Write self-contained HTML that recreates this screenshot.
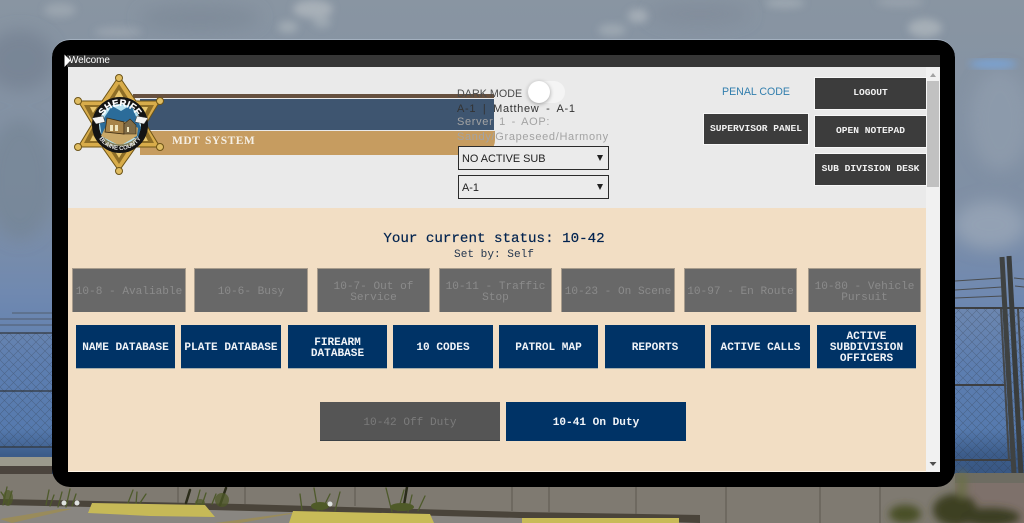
<!DOCTYPE html>
<html lang="en">
<head>
<meta charset="utf-8">
<title>MDT System</title>
<style>
html,body{margin:0;padding:0;width:1024px;height:523px;overflow:hidden;background:#7f8d9d}
*{box-sizing:border-box}
.a{position:absolute}
#bg{position:absolute;left:0;top:0}
.frame{left:52px;top:39px;width:903px;height:448px;background:#000;border-radius:18px;border-top:1px solid #a3b0bf}
.tbar{left:67px;top:55px;width:873px;height:12px;background:#363636}
.welcome{left:69px;top:54px;font:10px/13px "Liberation Sans Narrow","Liberation Sans",sans-serif;color:#fff;letter-spacing:-.1px}
.head{left:68px;top:67px;width:858px;height:141px;background:#eaeaea}
.beige{left:68px;top:208px;width:858px;height:264px;background:#f2dec4;border-bottom:1px solid #fff5e6}
.sb{left:926px;top:67px;width:14px;height:405px;background:#f1f1f1}
.thumb{left:927px;top:81px;width:12px;height:106px;background:#c1c1c1}
.btn{position:absolute;display:flex;align-items:center;justify-content:center;text-align:center;font-family:"Liberation Mono",monospace;font-size:11.1px;line-height:11px;padding-top:4px}
.dk{background:#3c3c3c;color:#f2f2f2;font-weight:bold;border:1px solid #f7f7f7;font-size:9.6px;padding:0 0 2px 0}
.st{background:#686868;color:#8b8b8b;top:268px;height:44px;border:1px solid #a89c8c;border-width:1px 1px 0 1px}
.nv{background:#003366;color:#f1f4f8;font-weight:bold;top:325px;height:44px;border-bottom:1px solid #a9b0ad}
.sel{left:458px;width:151px;height:24px;border:1px solid #2b2b2b;font:10.9px/24px "Liberation Sans",sans-serif;color:#222;padding-left:3px;background:#ebebeb}
.sel i{position:absolute;right:5px;top:8px;width:0;height:0;border-left:3px solid transparent;border-right:3px solid transparent;border-top:6px solid #222}
.lt{font-family:"Liberation Sans",sans-serif;font-size:11px;line-height:13px;white-space:nowrap;letter-spacing:.67px}
</style>
</head>
<body>
<svg id="bg" width="1024" height="523" viewBox="0 0 1024 523" xmlns="http://www.w3.org/2000/svg">
<defs>
<linearGradient id="sky" x1="0" y1="0" x2="0" y2="1">
<stop offset="0" stop-color="#8995a2"/><stop offset=".4" stop-color="#7f8fa5"/>
<stop offset=".56" stop-color="#7089b0"/><stop offset=".7" stop-color="#5d7eb0"/>
<stop offset=".82" stop-color="#567aae"/><stop offset=".87" stop-color="#3c5c8a"/><stop offset="1" stop-color="#2f4a72"/>
</linearGradient>
<filter id="b8"><feGaussianBlur stdDeviation="8"/></filter>
<filter id="b4"><feGaussianBlur stdDeviation="4"/></filter>
<pattern id="chain" width="9" height="9" patternUnits="userSpaceOnUse">
<path d="M0 0L9 9M9 0L0 9" stroke="#2c3238" stroke-width=".6" opacity=".32"/>
</pattern>
</defs>
<rect width="1024" height="523" fill="url(#sky)"/>
<g filter="url(#b8)">
<ellipse cx="20" cy="60" rx="34" ry="30" fill="#6f7d8d" opacity=".6"/>
<ellipse cx="20" cy="180" rx="34" ry="60" fill="#72818f" opacity=".5"/>
<ellipse cx="1000" cy="120" rx="30" ry="50" fill="#8f9cac" opacity=".8"/>
<ellipse cx="990" cy="225" rx="36" ry="24" fill="#98a6b8" opacity=".8"/>
<ellipse cx="200" cy="18" rx="60" ry="14" fill="#7a8795" opacity=".6"/>
<ellipse cx="700" cy="14" rx="50" ry="12" fill="#7b8896" opacity=".5"/>
</g>
<g filter="url(#b4)" fill="#adb5bc" opacity=".85">
<ellipse cx="313" cy="9" rx="20" ry="9"/>
<ellipse cx="322" cy="22" rx="9" ry="6" opacity=".7"/>
<ellipse cx="288" cy="27" rx="10" ry="6" opacity=".8"/>
<ellipse cx="60" cy="10" rx="16" ry="7" opacity=".6"/>
<ellipse cx="118" cy="32" rx="24" ry="5" opacity=".55"/>
<ellipse cx="638" cy="16" rx="10" ry="7" opacity=".9"/>
<ellipse cx="612" cy="30" rx="14" ry="6" opacity=".7"/>
<ellipse cx="785" cy="3" rx="20" ry="5" opacity=".7"/>
<ellipse cx="925" cy="28" rx="17" ry="9" opacity=".95"/>
<ellipse cx="900" cy="2" rx="24" ry="5" opacity=".5"/>
</g>
<ellipse cx="993" cy="64" rx="24" ry="5" fill="#7aa2d2" filter="url(#b4)"/>
<!-- left fence -->
<rect x="0" y="333" width="52" height="114" fill="url(#chain)"/>
<path d="M0 333H52M0 391H52M0 447H52" stroke="#33363a" stroke-width="1.2"/>
<path d="M12 313H52M0 319H52M0 325H52" stroke="#4b5058" stroke-width=".7"/>
<!-- right fence -->
<rect x="955" y="309" width="69" height="165" fill="url(#chain)"/>
<path d="M955 308H1024M955 385H1006M955 460H1012" stroke="#3d3f42" stroke-width="2"/>
<path d="M955 281L1001 278M955 290L1002 287M955 298L1003 296M1014 278L1024 279M1015 286L1024 287" stroke="#4a4d50" stroke-width="1"/>
<path d="M1002 257L1014 474" stroke="#3f4242" stroke-width="5"/>
<path d="M1009 256L1021 474" stroke="#3a3d3d" stroke-width="5"/>
<path d="M1001 309L1009 460M1018 309L1024 420" stroke="#44474a" stroke-width="2"/>
<!-- wall & ground -->
<rect x="0" y="457" width="52" height="9" fill="#9b9a8c"/>
<rect x="0" y="466" width="52" height="8" fill="#4b443d"/>
<rect x="0" y="474" width="955" height="49" fill="#7f7a71"/>
<rect x="955" y="473" width="69" height="10" fill="#6e6c62"/>
<rect x="955" y="483" width="69" height="40" fill="#7e716b"/>
<path d="M0 499L240 504L520 512L700 515L700 523L0 523Z" fill="#4a443a"/>
<path d="M0 505L90 507L290 512L520 518L700 523L0 523Z" fill="#898681"/>
<path d="M0 519L60 509H72L12 523ZM215 523L290 513H296L240 523Z" fill="#a08d4b" opacity=".7"/>
<path d="M178 487V503M245 487V504M355 487V506M512 487V511M549 487V512M636 487V514M726 487V523M820 487V523M880 487V523" stroke="#5c5850" stroke-width="1"/>
<!-- weeds -->
<g fill="none" stroke-linecap="round">
<g stroke="#4e5a2b" stroke-width="1.3">
<path d="M3 505L7 487M8 504L12 491M5 498L1 492"/>
<path d="M46 505L49 490M50 506L54 495M58 507L62 492M66 507L70 489M72 506L76 494"/>
<path d="M128 503L133 490M136 504L137 492M140 503L146 494"/>
<path d="M196 505L200 490M202 505L206 493M212 504L216 494"/>
<path d="M302 510L300 494M318 511L314 488M322 510L330 494M335 511L340 492"/>
<path d="M392 512L386 488M398 511L404 490M408 512L412 495M418 511L425 496"/>
</g>
<g stroke="#2b2c1a" stroke-width="2.5">
<path d="M220 505L226 488M186 503L190 490M404 505L407 487"/>
</g>
</g>
<g fill="#4f5a28">
<ellipse cx="8" cy="498" rx="5" ry="8" opacity=".7"/>
<ellipse cx="222" cy="500" rx="7" ry="7" opacity=".75"/>
<ellipse cx="200" cy="503" rx="5" ry="4" opacity=".7"/>
<ellipse cx="320" cy="506" rx="9" ry="4"/>
<ellipse cx="402" cy="507" rx="12" ry="4"/>
</g>
<g filter="url(#b4)">
<ellipse cx="905" cy="514" rx="16" ry="9" fill="#4a5028"/>
<ellipse cx="955" cy="510" rx="22" ry="16" fill="#3c4022"/>
<ellipse cx="990" cy="517" rx="30" ry="9" fill="#3a3e20"/>
<ellipse cx="962" cy="485" rx="5" ry="14" fill="#6c6f48"/>
</g>
<g fill="#dfe2e0"><circle cx="64" cy="503" r="2.5"/><circle cx="77" cy="503" r="2.5"/><circle cx="330" cy="504" r="2.5"/></g>
<!-- parking blocks -->
<path d="M92 503L205 505L215 517L150 516L88 513Z" fill="#c6b957"/>
<path d="M293 511L430 514L434 523L289 523Z" fill="#c8bb58"/>
<path d="M522 518H679V523H522Z" fill="#c8bb58"/>
</svg>

<div class="a frame"></div>
<div class="a tbar"></div>
<div class="a head"></div>
<div class="a beige"></div>
<div class="a sb"></div>
<div class="a thumb"></div>
<svg class="a" style="left:926px;top:67px" width="14" height="405"><path d="M4 10L7 6L10 10Z" fill="#a3a3a3"/><path d="M3.5 395H10.5L7 399Z" fill="#4f4f4f"/></svg>
<div class="a welcome">Welcome</div>
<svg class="a" style="left:64px;top:54px" width="8" height="14"><path d="M.5 .5V13L6.5 6.5Z" fill="#fff"/></svg>

<!-- banner -->
<div class="a" style="left:133px;top:94px;width:361px;height:4px;background:#66503f"></div>
<div class="a" style="left:140px;top:99px;width:354px;height:31px;background:#3e5570"></div>
<div class="a" style="left:140px;top:131px;width:355px;height:24px;background:#c69c60;border-bottom-right-radius:15px"></div>
<div class="a" style="left:172px;top:134px;font:bold 11.5px/15px 'Liberation Serif',serif;color:#f5efe4;letter-spacing:.5px;word-spacing:1.5px;white-space:nowrap">MDT SYSTEM</div>

<!-- badge -->
<svg class="a" style="left:70px;top:72px" width="98" height="104" viewBox="70 72 98 104">
<path d="M119 76L136 101H160L146 124L160 147H136L119 171L102 147H78L92 124L78 101H102Z" fill="#d8ac4a" stroke="#6d5417" stroke-width="1"/>
<path d="M119 84L130 101H108ZM119 164L130 147H108ZM84 105H104L92 120ZM154 105H134L146 120ZM84 143H104L92 128ZM154 143H134L146 128Z" fill="#75591c" opacity=".75"/>
<path d="M119 90L125 100H113ZM119 158L125 148H113ZM90 107H97L93 113ZM148 107H141L145 113ZM90 141H97L93 135ZM148 141H141L145 135Z" fill="#e8c66d"/>
<g fill="#e0bd62" stroke="#6d5417" stroke-width="1">
<circle cx="119" cy="78" r="3.5"/><circle cx="119" cy="171" r="3.5"/>
<circle cx="78" cy="101" r="3.5"/><circle cx="160" cy="101" r="3.5"/>
<circle cx="78" cy="147" r="3.5"/><circle cx="160" cy="147" r="3.5"/>
</g>
<circle cx="120" cy="125" r="28" fill="#141414"/>
<circle cx="120" cy="125" r="21" fill="#b5e0ef"/>
<path d="M100 124L112 106L121 111L131 105L141 128L138 138H102Z" fill="#2b6c9a"/>
<path d="M101 136L109 120L128 122L138 128L137 136L120 146Z" fill="#c9a868"/>
<path d="M107 118L124 122V134L105 132Z" fill="#a8854a" stroke="#3a2a12" stroke-width=".8"/>
<path d="M124 124L130 119L136 125V134H124Z" fill="#7f6c48" stroke="#3a2a12" stroke-width=".6"/>
<path d="M110 125H113V131H110ZM115 125H118V131H115ZM127 127H129V132H127Z" fill="#f0e7c0"/>
<path d="M103 137Q120 152 137 137L134 146H106Z" fill="#7e7c5a"/>
<path d="M92 118L103 116L105 122L96 124ZM148 118L137 116L135 122L144 124Z" fill="#f4f4f4" stroke="#333" stroke-width=".5"/>
<path id="arcTop" d="M101 125A19 19 0 0 1 139 125" fill="none"/>
<path id="arcBot" d="M95 125A25 25 0 0 0 145 125" fill="none"/>
<text font-family="Liberation Sans,sans-serif" font-weight="bold" font-size="9.5" fill="#fff" stroke="#fff" stroke-width=".25"><textPath href="#arcTop" startOffset="50%" text-anchor="middle">SHERIFF</textPath></text>
<text font-family="Liberation Sans,sans-serif" font-weight="bold" font-size="6" fill="#e2e2e2"><textPath href="#arcBot" startOffset="50%" text-anchor="middle">BLAINE COUNTY</textPath></text>
</svg>

<!-- middle column -->
<div class="a lt" style="left:457px;top:88px;color:#4a4a4a;font-size:10.7px;letter-spacing:.05px">DARK MODE</div>
<div class="a" style="left:527px;top:81px;width:38px;height:22px;border-radius:11px;background:#f4f4f4"></div>
<div class="a" style="left:528px;top:81px;width:22px;height:22px;border-radius:50%;background:#fff;box-shadow:0 1px 4px rgba(0,0,0,.35)"></div>
<div class="a lt" style="left:457px;top:103px;color:#333;word-spacing:3px">A-1 | Matthew - A-1</div>
<div class="a lt" style="left:457px;top:116px;color:#a3a3a3;word-spacing:2px">Server 1 - AOP:</div>
<div class="a lt" style="left:457px;top:131px;color:#a3a3a3">Sandy/Grapeseed/Harmony</div>
<div class="a sel" style="top:146px">NO ACTIVE SUB<i></i></div>
<div class="a sel" style="top:175px">A-1<i></i></div>

<!-- right column -->
<div class="a" style="left:703px;top:85px;width:106px;text-align:center;font:10.6px/14px 'Liberation Sans',sans-serif;color:#337fae;white-space:nowrap">PENAL CODE</div>
<div class="btn dk" style="left:814px;top:77px;width:113px;height:33px">LOGOUT</div>
<div class="btn dk" style="left:814px;top:115px;width:113px;height:33px">OPEN NOTEPAD</div>
<div class="btn dk" style="left:814px;top:153px;width:113px;height:33px">SUB DIVISION DESK</div>
<div class="btn dk" style="left:703px;top:113px;width:106px;height:32px">SUPERVISOR PANEL</div>

<!-- status -->
<div class="a" style="left:68px;top:231px;width:852px;text-align:center;font:14.2px/16px 'Liberation Mono',monospace;color:#02234f;-webkit-text-stroke:.2px #02234f">Your current status: 10-42</div>
<div class="a" style="left:68px;top:249px;width:852px;text-align:center;font:11.1px/13px 'Liberation Mono',monospace;color:#25374f">Set by: Self</div>

<div class="btn st" style="left:72px;width:114px">10-8 - Avaliable</div>
<div class="btn st" style="left:194px;width:114px">10-6- Busy</div>
<div class="btn st" style="left:317px;width:113px">10-7- Out of Service</div>
<div class="btn st" style="left:439px;width:113px">10-11 - Traffic Stop</div>
<div class="btn st" style="left:561px;width:114px">10-23 - On Scene</div>
<div class="btn st" style="left:684px;width:113px">10-97 - En Route</div>
<div class="btn st" style="left:808px;width:113px;padding:4px 4px 0">10-80 - Vehicle Pursuit</div>

<div class="btn nv" style="left:76px;width:99px">NAME DATABASE</div>
<div class="btn nv" style="left:181px;width:100px">PLATE DATABASE</div>
<div class="btn nv" style="left:288px;width:99px;padding:4px 10px 0">FIREARM DATABASE</div>
<div class="btn nv" style="left:393px;width:100px">10 CODES</div>
<div class="btn nv" style="left:499px;width:99px">PATROL MAP</div>
<div class="btn nv" style="left:605px;width:100px">REPORTS</div>
<div class="btn nv" style="left:711px;width:99px">ACTIVE CALLS</div>
<div class="btn nv" style="left:817px;width:99px;padding:4px 6px 0">ACTIVE SUBDIVISION OFFICERS</div>

<div class="btn" style="left:320px;top:402px;width:180px;height:39px;background:#555;color:#7b7b7b;border-bottom:1px solid #3d4145">10-42 Off Duty</div>
<div class="btn" style="left:506px;top:402px;width:180px;height:39px;background:#003366;color:#f1f4f8;font-weight:bold">10-41 On Duty</div>
</body>
</html>
